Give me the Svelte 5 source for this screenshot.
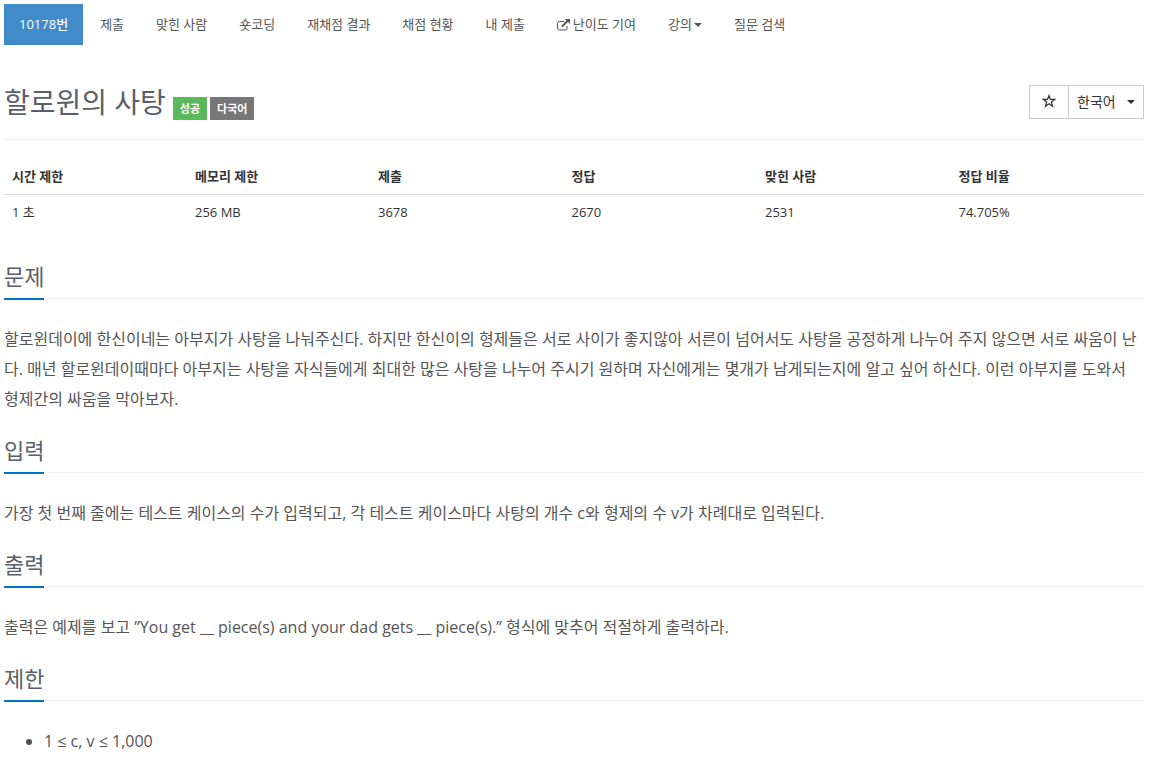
<script lang="ts">
	type MenuItem = { label: string; icon?: 'external'; caret?: boolean; active?: boolean };

	const menu: MenuItem[] = [
		{ label: '10178번', active: true },
		{ label: '제출' },
		{ label: '맞힌 사람' },
		{ label: '숏코딩' },
		{ label: '재채점 결과' },
		{ label: '채점 현황' },
		{ label: '내 제출' },
		{ label: '난이도 기여', icon: 'external' },
		{ label: '강의', caret: true },
		{ label: '질문 검색' }
	];

	const info = [
		{ name: '시간 제한', value: '1 초' },
		{ name: '메모리 제한', value: '256 MB' },
		{ name: '제출', value: '3678' },
		{ name: '정답', value: '2670' },
		{ name: '맞힌 사람', value: '2531' },
		{ name: '정답 비율', value: '74.705%' }
	];

	const sections = [
		{
			title: '문제',
			text: '할로윈데이에 한신이네는 아부지가 사탕을 나눠주신다. 하지만 한신이의 형제들은 서로 사이가 좋지않아 서른이 넘어서도 사탕을 공정하게 나누어 주지 않으면 서로 싸움이 난다. 매년 할로윈데이때마다 아부지는 사탕을 자식들에게 최대한 많은 사탕을 나누어 주시기 원하며 자신에게는 몇개가 남게되는지에 알고 싶어 하신다. 이런 아부지를 도와서 형제간의 싸움을 막아보자.'
		},
		{
			title: '입력',
			text: '가장 첫 번째 줄에는 테스트 케이스의 수가 입력되고, 각 테스트 케이스마다 사탕의 개수 c와 형제의 수 v가 차례대로 입력된다.'
		},
		{
			title: '출력',
			text: '출력은 예제를 보고 ”You get __ piece(s) and your dad gets __ piece(s).” 형식에 맞추어 적절하게 출력하라.'
		},
		{ title: '제한', list: ['1 ≤ c, v ≤ 1,000'] }
	];

	let language = $state('ko');
	let starred = $state(false);
</script>

<div class="container">
	<nav>
		<ul class="problem-menu">
			{#each menu as item (item.label)}
				<li>
					<a href="#top" class:active={item.active}>
						{#if item.icon === 'external'}
							<svg class="external" viewBox="0 0 14 12" aria-hidden="true">
								<path d="M7 2.500H2.500Q.5 2.500.5 4.500v4.500q0 2 2 2h5.500q2 0 2-2V7" fill="none" stroke="currentColor" />
								<path d="M5 7.500 11 1.500" fill="none" stroke="currentColor" stroke-width="2" />
								<path d="M8 0H13V5z" fill="currentColor" />
							</svg>
						{/if}
						{item.label}{#if item.caret}<span class="caret"></span>{/if}
					</a>
				</li>
			{/each}
		</ul>
	</nav>

	<header class="page-header">
		<h1>할로윈의 사탕</h1>
		<span class="label success">성공</span>
		<span class="label multilang">다국어</span>
		<div class="btn-group">
			<button type="button" aria-label="즐겨찾기" aria-pressed={starred} onclick={() => (starred = !starred)}>
				<svg class="star" viewBox="0 0 14 14" aria-hidden="true">
					<path
						d="M7 1.500 8.400 5.400H12.700L9.300 8 10.500 12.200 7 9.700 3.500 12.200 4.700 8 1.300 5.400H5.600z"
						fill={starred ? 'currentColor' : 'none'}
						stroke="currentColor"
						stroke-width="1.200"
					/>
				</svg>
			</button>
			<div class="language">
				<select aria-label="언어" bind:value={language}>
					<option value="ko">한국어</option>
				</select>
				<span class="caret"></span>
			</div>
		</div>
	</header>

	<table>
		<thead>
			<tr>
				{#each info as col (col.name)}
					<th scope="col">{col.name}</th>
				{/each}
			</tr>
		</thead>
		<tbody>
			<tr>
				{#each info as col (col.name)}
					<td>{col.value}</td>
				{/each}
			</tr>
		</tbody>
	</table>

	{#each sections as section (section.title)}
		<section>
			<div class="headline">
				<h2>{section.title}</h2>
			</div>
			<div class="problem-text">
				{#if section.list}
					<ul>
						{#each section.list as line}
							<li>{line}</li>
						{/each}
					</ul>
				{:else}
					<p>{section.text}</p>
				{/if}
			</div>
		</section>
	{/each}
</div>

<style>
	:global(body) {
		background: #fff;
		color: #333;
		font-family: 'Open Sans', 'Noto Sans CJK KR', sans-serif;
		font-size: 13px;
		line-height: 21px;
	}
	.container {
		padding: 4px 5px 0 4px;
	}
	.problem-menu {
		display: flex;
		flex-wrap: wrap;
		gap: 2px;
		margin: 0;
		padding: 0;
		list-style: none;
	}
	.problem-menu a {
		display: flex;
		align-items: center;
		height: 21px;
		padding: 10px 15px;
		color: #555;
		text-decoration: none;
		white-space: nowrap;
	}
	.problem-menu a.active {
		background: #428bca;
		color: #fff;
		font-weight: 500;
	}
	.external {
		width: 14px;
		height: 12px;
		margin-right: 2px;
	}
	.caret {
		border-top: 4px solid currentColor;
		border-right: 4px solid transparent;
		border-left: 4px solid transparent;
	}
	.problem-menu .caret {
		margin-left: 2px;
	}
	.page-header {
		display: flex;
		align-items: flex-end;
		margin: 40px 0 20px;
		padding-bottom: 19px;
		border-bottom: 1px solid #eee;
	}
	h1 {
		margin: 0 7px 0 0;
		color: #585f69;
		font-size: 28px;
		font-weight: 400;
		line-height: 35px;
	}
	.label {
		margin-right: 3px;
		padding: 0 7px;
		color: #fff;
		font-size: 11px;
		font-weight: 700;
		line-height: 23px;
	}
	.success {
		background: #5cb85c;
	}
	.multilang {
		background: #777;
	}
	.btn-group {
		display: flex;
		align-self: flex-start;
		margin-left: auto;
		border: 1px solid #ccc;
	}
	button {
		display: flex;
		align-items: center;
		justify-content: center;
		width: 39px;
		height: 32px;
		padding: 0 0 2px;
		border: 0;
		border-right: 1px solid #ccc;
		background: #fff;
		color: #333;
		cursor: pointer;
	}
	.star {
		width: 14px;
		height: 14px;
	}
	.language {
		display: grid;
		align-items: center;
	}
	.language > * {
		grid-area: 1 / 1;
	}
	.language .caret {
		justify-self: end;
		margin-right: 8px;
		pointer-events: none;
	}
	select {
		height: 32px;
		padding: 0 27px 2px 8px;
		border: 0;
		background: #fff;
		color: #333;
		font: inherit;
		font-size: 14px;
		appearance: none;
	}
	table {
		width: 100%;
		border-collapse: collapse;
		table-layout: fixed;
	}
	th,
	td {
		width: 17%;
		padding: 7px 8px;
		text-align: left;
	}
	th:nth-child(-n + 2) {
		width: 16%;
	}
	th {
		padding-top: 6px;
		border-bottom: 1px solid #ddd;
		font-weight: 700;
	}
	td {
		font-weight: 400;
	}
	section {
		margin-top: 31px;
	}
	section + section {
		margin-top: 21px;
	}
	.headline {
		display: flex;
		border-bottom: 1px dotted #e4e9f0;
	}
	h2 {
		margin: 0 0 -2px;
		padding-bottom: 7px;
		border-bottom: 2px solid #0076c0;
		color: #585f69;
		font-size: 22px;
		font-weight: 400;
		line-height: 30px;
	}
	.problem-text {
		margin-top: 25px;
		color: #555;
		font-size: 16px;
		line-height: 30px;
	}
	.problem-text p {
		margin: 0;
		word-break: break-all;
	}
	.problem-text ul {
		margin: 0;
		padding-left: 40px;
	}
</style>
